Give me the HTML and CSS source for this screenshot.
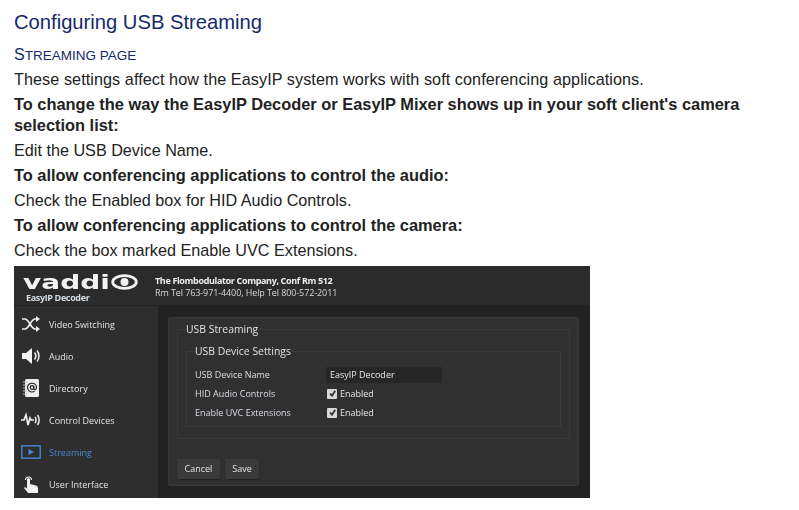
FILE: index.html
```html
<!DOCTYPE html>
<html lang="en">
<head>
<meta charset="utf-8">
<title>Configuring USB Streaming</title>
<link rel="stylesheet" href="styles.css">
</head>
<body>
<h1 class="title">Configuring USB Streaming</h1>
<h2 class="subhead">Streaming page</h2>
<p class="line first">These settings affect how the EasyIP system works with soft conferencing applications.</p>
<p class="line strong">To change the way the EasyIP Decoder or EasyIP Mixer shows up in your soft client's camera selection list:</p>
<p class="line">Edit the USB Device Name.</p>
<p class="line strong">To allow conferencing applications to control the audio:</p>
<p class="line tight">Check the Enabled box for HID Audio Controls.</p>
<p class="line strong">To allow conferencing applications to control the camera:</p>
<p class="line">Check the box marked Enable UVC Extensions.</p>

<div class="shot">
  <header class="top">
    <div class="brand">
      <div class="logo"><span class="logo-word">vaddi</span><svg class="logo-o" viewBox="0 0 27 16" width="27" height="16"><ellipse cx="13.500" cy="8" rx="11.800" ry="6.300" fill="none" stroke="#f2f2f2" stroke-width="2.800"/><circle cx="13.500" cy="8" r="4" fill="#f2f2f2"/></svg></div>
      <div class="product">EasyIP Decoder</div>
    </div>
    <div class="room">
      <div class="room-name">The Flombodulator Company, Conf Rm 512</div>
      <div class="room-tel">Rm Tel 763-971-4400, Help Tel 800-572-2011</div>
    </div>
  </header>
  <div class="main">
    <nav class="side">
      <div class="item"><svg class="ico" viewBox="0 0 20 20"><path d="M1 5h3c4 0 6 10 10 10h3M1 15h3c4 0 6-10 10-10h3" fill="none" stroke="#eee" stroke-width="1.700"/><path d="M15 2l4 3-4 3zM15 12l4 3-4 3z" fill="#eee"/></svg><span>Video Switching</span></div>
      <div class="item"><svg class="ico" viewBox="0 0 20 20"><path d="M1 7h4l6-5v16l-6-5H1z" fill="#f2f2f2"/><path d="M13.500 6.500c1.600 2 1.600 5 0 7M16 4.500c2.600 3.200 2.600 7.800 0 11" fill="none" stroke="#f2f2f2" stroke-width="1.500"/></svg><span>Audio</span></div>
      <div class="item"><svg class="ico" viewBox="0 0 20 20"><rect x="4" y="1" width="14" height="18" rx="1.500" fill="#eee"/><path d="M2 4h4M2 7h4M2 10h4M2 13h4M2 16h4" stroke="#bbb" stroke-width="1.200"/><circle cx="11" cy="9.500" r="1.800" fill="none" stroke="#222" stroke-width="1.200"/><path d="M12.800 7.700v3c0 1.500 2.700 1.300 2.700-1.200 0-2.500-2-4.300-4.500-4.300s-4.500 2-4.500 4.300 2 4.500 4.500 4.500c1 0 1.800-.2 2.500-.7" fill="none" stroke="#222" stroke-width="1.100"/></svg><span>Directory</span></div>
      <div class="item"><svg class="ico" viewBox="0 0 20 20"><path d="M0 10h3l2-5 2 10 2-7 1 2h3" fill="none" stroke="#eee" stroke-width="1.700"/><path d="M14 7c1.300 1.800 1.300 4.200 0 6M16.500 5c2 3 2 7 0 10" fill="none" stroke="#eee" stroke-width="1.500"/></svg><span>Control Devices</span></div>
      <div class="item active"><svg class="ico" viewBox="0 0 20 20"><rect x="0.800" y="3.800" width="18.400" height="12.400" fill="none" stroke="#3f7cc4" stroke-width="1.600"/><path d="M7.500 7l5.500 3-5.500 3z" fill="#4a86d0"/></svg><span>Streaming</span></div>
      <div class="item"><svg class="ico" viewBox="0 0 20 20"><path d="M6 9V5.500a1.500 1.500 0 0 1 3 0V10l6 1.500c1.500.5 2 1.500 2 3V19H7l-4-5 1-1 2 1.500z" fill="#f2f2f2"/><path d="M4.500 6a3 3 0 1 1 6 0" fill="none" stroke="#eee" stroke-width="1.100"/></svg><span>User Interface</span></div>
    </nav>
    <section class="content">
      <div class="panel">
        <fieldset class="outer">
          <legend>USB Streaming</legend>
          <fieldset class="inner">
            <legend>USB Device Settings</legend>
            <div class="row"><span class="label">USB Device Name</span><span class="input">EasyIP Decoder</span></div>
            <div class="row"><span class="label">HID Audio Controls</span><span class="check"><svg viewBox="0 0 9 9" width="9" height="9"><path d="M2 4.500l2 2.200L7.200 1.800" fill="none" stroke="#333" stroke-width="1.800"/></svg></span><span class="check-text">Enabled</span></div>
            <div class="row"><span class="label">Enable UVC Extensions</span><span class="check"><svg viewBox="0 0 9 9" width="9" height="9"><path d="M2 4.500l2 2.200L7.200 1.800" fill="none" stroke="#333" stroke-width="1.800"/></svg></span><span class="check-text">Enabled</span></div>
          </fieldset>
        </fieldset>
        <div class="actions"><span class="btn">Cancel</span><span class="btn">Save</span></div>
      </div>
    </section>
  </div>
</div>
</body>
</html>
```

FILE: styles.css
```css
* { box-sizing: border-box; }
html, body { margin: 0; background: #fff; }
body {
  width: 799px;
  height: 510px;
  overflow: hidden;
  padding: 10px 0 0 14px;
  font-family: "Liberation Sans", Arial, sans-serif;
  color: #222;
}
.title {
  margin: 0;
  font-size: 20.200px;
  font-weight: 400;
  line-height: 24px;
  color: #14296b;
}
.subhead {
  margin: 11px 0 0;
  font-size: 13.500px;
  font-weight: 400;
  line-height: 20px;
  color: #14296b;
  text-transform: uppercase;
}
.subhead::first-letter { font-size: 16px; }
.line {
  margin: 5px 0 0;
  width: 760px;
  font-size: 16.200px;
  line-height: 20px;
}
.line.first { margin-top: 3px; letter-spacing: 0.070px; }
.line.tight { margin-top: 4px; }
.line.strong { font-size: 16.400px; font-weight: 700; line-height: 20.500px; }

.shot {
  margin-top: 6px;
  width: 576px;
  height: 232px;
  background: #222;
  overflow: hidden;
  font-family: "Open Sans", sans-serif;
  font-size: 9px;
  color: #e4e4e4;
  filter: blur(0.3px);
}
.top {
  height: 40px;
  background: #2b2b2b;
  border-bottom: 1px solid #222;
  display: flex;
  padding: 7px 0 0 9px;
  gap: 18px;
}
.brand { width: 114px; }
.logo { display: flex; align-items: center; height: 18px; }
.logo-word {
  flex: none;
  width: 88px;
  font-family: "DejaVu Sans", sans-serif;
  font-weight: 700;
  font-size: 20px;
  line-height: 18px;
  color: #f2f2f2;
  transform: scaleX(1.400);
  transform-origin: left center;
}
.logo-o { flex: none; }
.product {
  margin: 1px 0 0 3px;
  font-size: 9px;
  line-height: 12px;
  font-weight: 700;
  letter-spacing: -0.350px;
  color: #d6dee6;
}
.room { padding-top: 2px; }
.room-name { font-size: 9px; line-height: 12px; font-weight: 700; color: #efefef; letter-spacing: -0.350px; }
.room-tel { font-size: 9px; line-height: 12px; color: #d8d8d8; letter-spacing: -0.100px; }
.main { display: flex; height: 192px; }
.side {
  flex: none;
  width: 144px;
  background: #2e2e2e;
  padding-top: 2px;
}
.item {
  height: 32px;
  display: flex;
  align-items: center;
  padding-left: 7px;
  gap: 8px;
  color: #e4e4e4;
}
.item.active { color: #4a86d0; }
.ico { flex: none; width: 20px; height: 20px; }
.content { flex: 1; padding: 11px 11px 12px 10px; }
.panel {
  height: 169px;
  background: #303030;
  border: 1px solid #383838;
  border-radius: 2px;
  padding: 4px 8px 0 8px;
}
fieldset {
  margin: 0;
  padding: 0;
  min-width: 0;
  border: 1px solid #3a3a3a;
}
legend { padding: 0; font-size: 10.400px; line-height: 14px; color: #e2e2e2; }
.outer { height: 117px; padding: 0 8px; }
.inner { height: 83px; margin-top: 8px; padding: 7px 8px 0; }
.row { display: flex; align-items: center; height: 19px; }
.label { width: 131px; color: #dcdce6; }
.input {
  width: 116px;
  height: 16px;
  background: #262626;
  padding-left: 4px;
  line-height: 16px;
  color: #e8e8e8;
}
.check {
  flex: none;
  width: 10px;
  height: 10px;
  margin-left: 1px;
  background: #d8d8d8;
  border-radius: 1px;
  display: flex;
  align-items: center;
  justify-content: center;
}
.check-text { margin-left: 3px; color: #e8e8e8; }
.actions { display: flex; gap: 5px; margin-top: 20px; }
.btn {
  height: 20px;
  padding: 0 7.500px;
  line-height: 20px;
  background: #3a3a3a;
  border-radius: 2px;
  box-shadow: 0 1px 1px #222;
  color: #e4e4e4;
}
```
